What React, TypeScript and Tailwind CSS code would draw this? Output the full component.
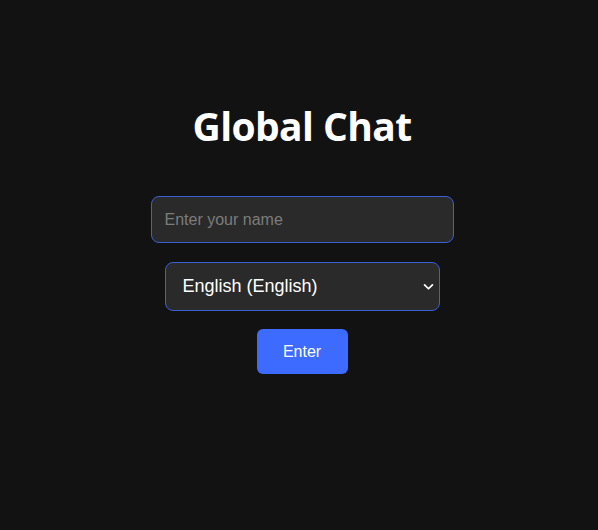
import { useState } from "react";

function Chevron() {
  return (
    <svg viewBox="0 0 12 8" className="pointer-events-none absolute right-[6px] top-1/2 h-[7px] w-[11px] -translate-y-1/2" fill="none" stroke="white" strokeWidth="2" strokeLinecap="round" strokeLinejoin="round">
      <path d="M1.5 1.5 6 6l4.5-4.5" />
    </svg>
  );
}

export default function App() {
  const [name, setName] = useState("");
  const [lang, setLang] = useState("en");

  return (
    <div className="min-h-[530px] bg-[#121212] flex flex-col items-center pt-[100px] pl-[6px] font-['Liberation_Sans',Arial,sans-serif]">
      <h1 className="text-[39px] leading-[52px] font-bold text-white font-['Open_Sans','Noto_Sans',sans-serif] tracking-[-0.6px]">
        Global Chat
      </h1>
      <input
        value={name}
        onChange={(e) => setName(e.target.value)}
        placeholder="Enter your name"
        className="mt-[44px] w-[303px] h-[47px] rounded-[8px] border border-[#3d5fd6] bg-[#2a2a2a] px-[13px] text-[16px] text-white placeholder:text-[#7c7c7c] outline-none"
      />
      <div className="relative mt-[19px] w-[275px]">
        <select
          value={lang}
          onChange={(e) => setLang(e.target.value)}
          className="appearance-none w-full h-[49px] rounded-[8px] border border-[#3d5fd6] bg-[#2a2a2a] pl-[17px] pr-8 text-[18px] text-white outline-none"
        >
          <option value="en">English (English)</option>
          <option value="es">Español (Spanish)</option>
          <option value="fr">Français (French)</option>
        </select>
        <Chevron />
      </div>
      <button className="mt-[18px] w-[91px] h-[45px] rounded-[6px] bg-[#3d6bff] text-white text-[16px]">
        Enter
      </button>
    </div>
  );
}
